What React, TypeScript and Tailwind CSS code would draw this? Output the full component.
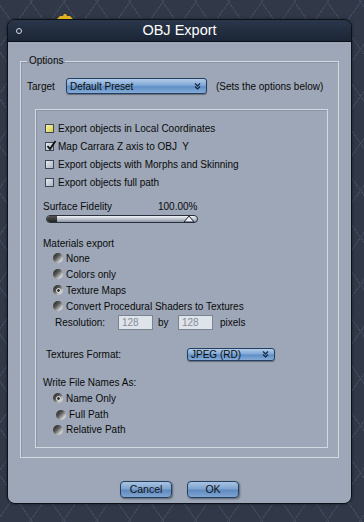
const font = "font-['Liberation_Sans',Arial,sans-serif]";

function Chevrons() {
  return (
    <svg width="7" height="8" viewBox="0 0 7 8" className="shrink-0">
      <path d="M1 1.5 L3.5 4 L6 1.5 M1 4.5 L3.5 7 L6 4.5" fill="none" stroke="#10243f" strokeWidth="1.2" />
    </svg>
  );
}

function BlueSelect({ label, className }: { label: string; className: string }) {
  return (
    <div
      className={`flex items-center justify-between rounded-[3px] border border-[#223f63] bg-[linear-gradient(to_bottom,#b3cbe8,#80a8d6_45%,#5f8fc6_55%,#86acd8)] pl-[3px] pr-[5px] text-[10px] text-[#0c0c0c] shadow-[0_1px_1px_rgba(0,0,0,0.35)] ${className}`}
    >
      <span>{label}</span>
      <Chevrons />
    </div>
  );
}

function Checkbox({ label, yellow, checked }: { label: string; yellow?: boolean; checked?: boolean }) {
  return (
    <div className="flex h-[18px] items-center pl-[9px]">
      <div
        className={`relative flex h-[9px] w-[9px] items-center justify-center border border-[#3f4655] ${
          yellow
            ? "bg-[linear-gradient(135deg,#f8f4a8,#d8cc48)]"
            : "bg-[linear-gradient(135deg,#e6ebf2,#aab3c1)]"
        }`}
      >
        {checked && (
          <svg width="11" height="11" viewBox="0 0 11 11" className="absolute -top-[3px] left-[0px]">
            <path d="M1.5 6 L4 9 L9.5 1" fill="none" stroke="#111" strokeWidth="1.8" />
          </svg>
        )}
      </div>
      <span className="ml-[4px] whitespace-pre">{label}</span>
    </div>
  );
}

function Radio({ label, selected, h = "h-[16px]", pl = "pl-[17px]" }: { label: string; selected?: boolean; h?: string; pl?: string }) {
  return (
    <div className={`flex items-center ${h} ${pl}`}>
      <div className="flex h-[10px] w-[10px] items-center justify-center rounded-full bg-[linear-gradient(135deg,#1e1e1e,#555_40%,#c9c9c9_75%,#f4f4f4)]">
        {selected && <div className="h-[5px] w-[5px] rounded-full border border-[#eee] bg-[#3a3a3a]" />}
      </div>
      <span className="ml-[3px]">{label}</span>
    </div>
  );
}

function Button({ label }: { label: string }) {
  return (
    <div className="flex h-[17px] w-[52px] items-center justify-center rounded-[4px] border border-[#23405f] bg-[linear-gradient(to_bottom,#a9c3e2,#7ea4d0_45%,#5f8ac0_55%,#7fa5d1)] text-[10.5px] text-[#111] shadow-[1px_1px_2px_rgba(0,0,0,0.4)]">
      {label}
    </div>
  );
}

function NumField({ value }: { value: string }) {
  return (
    <div className="flex h-[15px] items-center border border-[#7b8391] bg-[#dfe3ea] pl-[3px] text-[10px] text-[#858c98] w-[35px]">
      {value}
    </div>
  );
}

export default function App() {
  return (
    <div
      className={`h-[522px] w-[364px] overflow-hidden bg-[#313848] bg-[repeating-linear-gradient(55deg,transparent_0_26px,#404a5c_26px_27px),repeating-linear-gradient(125deg,transparent_0_26px,#404a5c_26px_27px)] ${font}`}
    >
      <div className="flex h-[19px] items-end pl-[57px]">
        <svg width="16" height="5" viewBox="0 0 16 5">
          <path d="M0 5 L3 2 L6 2 L7 0 L9 0 L10 2 L13 2 L16 5 Z" fill="#e0b11e" />
        </svg>
      </div>
      <div className="ml-[7px] flex h-[485px] w-[345px] flex-col overflow-hidden rounded-[8px] border border-[#0b1019] shadow-[0_0_3px_rgba(0,0,0,0.5)]">
        <div className="flex h-[22px] shrink-0 items-center border-b border-[#0b1019] bg-[linear-gradient(to_bottom,#2a364a,#1b2535)]">
          <div className="ml-[8px] h-[6px] w-[6px] rounded-full border-[1.5px] border-[#d8dde4]" />
          <div className="flex-1 text-center text-[14.5px] text-white">OBJ Export</div>
          <div className="w-[14px]" />
        </div>
        <div className="flex flex-1 flex-col bg-[#9da7b7] pt-[13px] text-[10px] text-[#0a0a0a]">
          <fieldset className="mx-[12px] border border-[#d3d9e2] shadow-[inset_1px_1px_0_#8a93a3]">
            <legend className="ml-[6px] px-[2px] text-[10px] leading-[12px]">Options</legend>
            <div className="mt-[11px] flex h-[16px] items-center pl-[6px]">
              <span className="w-[39px]">Target</span>
              <BlueSelect label="Default Preset" className="h-[16px] w-[141px]" />
              <span className="ml-[9px]">(Sets the options below)</span>
            </div>
            <div className="mb-[9px] ml-[14px] mr-[10px] mt-[15px] border border-[#d3d9e2] pb-[11px] pt-[9px] shadow-[inset_1px_1px_0_#8a93a3]">
              <Checkbox label="Export objects in Local Coordinates" yellow />
              <Checkbox label="Map Carrara Z axis to OBJ  Y" checked />
              <Checkbox label="Export objects with Morphs and Skinning" />
              <Checkbox label="Export objects full path" />
              <div className="mt-[8px] flex h-[14px] items-center pl-[7px]">
                <span className="w-[115px]">Surface Fidelity</span>
                <span>100.00%</span>
              </div>
              <div className="relative ml-[10px] mt-[2px] h-[8px] w-[152px] overflow-hidden rounded-full border border-[#2a303c] bg-[linear-gradient(to_bottom,#f2f4f7,#b8c0cc_55%,#8c95a3)]">
                <div className="h-full w-[10px] bg-[linear-gradient(to_bottom,#555,#222)]" />
              </div>
              <div className="relative ml-[10px] h-0 w-[152px]">
                <svg width="12" height="8" viewBox="0 0 12 8" className="absolute -top-[8px] left-[137px]">
                  <path d="M1 7 L6 1 L11 7 Z" fill="#eef2f7" stroke="#1d2330" strokeWidth="1" />
                </svg>
              </div>
              <div className="mt-[13px] flex h-[14px] items-center pl-[7px]">Materials export</div>
              <Radio label="None" />
              <Radio label="Colors only" />
              <Radio label="Texture Maps" selected />
              <Radio label="Convert Procedural Shaders to Textures" />
              <div className="flex h-[17px] items-center pl-[19px]">
                <span className="w-[63px]">Resolution:</span>
                <NumField value="128" />
                <span className="ml-[5px] w-[20px]">by</span>
                <NumField value="128" />
                <span className="ml-[7px]">pixels</span>
              </div>
              <div className="mt-[16px] flex h-[14px] items-center pl-[10px]">
                <span className="w-[141px]">Textures Format:</span>
                <BlueSelect label="JPEG (RD)" className="h-[13px] w-[88px]" />
              </div>
              <div className="mt-[14px] flex h-[14px] items-center pl-[7px]">Write File Names As:</div>
              <div className="mt-[1px]">
                <Radio label="Name Only" selected />
                <Radio label="Full Path" h="h-[17px]" pl="pl-[20px]" />
                <Radio label="Relative Path" h="h-[13px]" />
              </div>
            </div>
          </fieldset>
          <div className="mt-[23px] flex justify-center gap-[15px]">
            <Button label="Cancel" />
            <Button label="OK" />
          </div>
        </div>
      </div>
    </div>
  );
}
